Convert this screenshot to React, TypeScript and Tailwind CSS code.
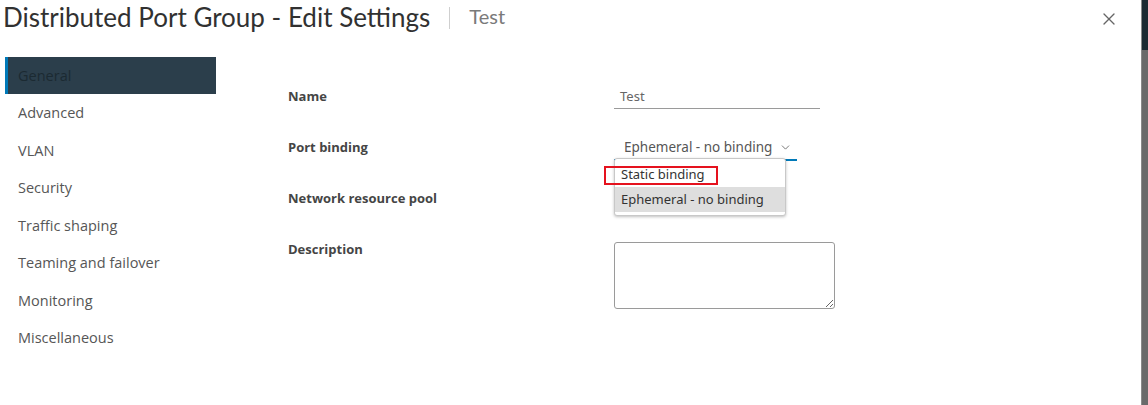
import { X, ChevronDown } from "lucide-react"

const NAV = [
  "General",
  "Advanced",
  "VLAN",
  "Security",
  "Traffic shaping",
  "Teaming and failover",
  "Monitoring",
  "Miscellaneous",
]

const ui = { fontFamily: "Lato, 'Noto Sans', sans-serif" }
const side = { fontFamily: "'Open Sans', 'Noto Sans', sans-serif" }
const field = { fontFamily: "'Noto Sans', 'DejaVu Sans', sans-serif" }

export default function App() {
  return (
    <div className="flex h-[405px] w-[1148px] overflow-hidden bg-white" style={ui}>
      <div className="relative flex flex-1 flex-col">
        {/* Header */}
        <div className="flex h-[57px] items-start pt-[2px]">
          <h1 className="pl-[3px] text-[26px] leading-[30px] text-[#313131]">
            Distributed Port Group - Edit Settings
          </h1>
          <div className="ml-[19px] mt-[5px] h-[22px] w-px bg-[#cfcfcf]" />
          <span className="ml-[19px] mt-[2px] text-[20px] leading-[24px] text-[#7a7a7a]">Test</span>
          <button className="ml-auto mr-[22px] mt-[7px] text-[#666]">
            <X size={20} strokeWidth={1.6} />
          </button>
        </div>

        <div className="flex flex-1">
          {/* Sidebar */}
          <nav className="ml-[5px] w-[211px] shrink-0" style={side}>
            {NAV.map((item, i) =>
              i === 0 ? (
                <div
                  key={item}
                  className="flex h-[37px] items-center border-l-[3px] border-[#0079b8] bg-[#2b3e4b] pl-[10px] text-[14.5px] text-[#1b2a32]"
                >
                  {item}
                </div>
              ) : (
                <div key={item} className="flex h-[37.6px] items-center pl-[13px] text-[14.5px] text-[#565656]">
                  {item}
                </div>
              )
            )}
          </nav>

          {/* Form */}
          <div className="ml-[72px] flex flex-col pt-[14px]" style={side}>
            <div className="flex h-[51px] items-center">
              <div className="w-[326px] text-[13px] font-bold text-[#454545]">Name</div>
              <div className="w-[206px] border-b border-[#9a9a9a] pb-[2px] pl-[6px] pt-[3px] text-[13px] text-[#666]" style={field}>
                Test
              </div>
            </div>
            <div className="flex h-[51px] items-center">
              <div className="w-[326px] text-[13px] font-bold text-[#454545]">Port binding</div>
              <div className="flex w-[183px] items-center border-b-2 border-[#0079b8] pb-[2px] pl-[10px] pt-[3px] text-[13.5px] text-[#565656]" style={field}>
                <span>Ephemeral - no binding</span>
                <ChevronDown size={13} strokeWidth={1.6} className="ml-auto mr-[5px] text-[#666]" />
              </div>
            </div>
            <div className="flex h-[51px] items-center">
              <div className="w-[326px] text-[13px] font-bold text-[#454545]">Network resource pool</div>
            </div>
            <div className="mt-[15px] flex">
              <div className="w-[326px] pt-[1px] text-[13px] font-bold text-[#454545]">Description</div>
              <textarea className="mt-[3px] h-[67px] w-[221px] resize rounded-[3px] border border-[#9a9a9a] outline-none" />
            </div>
          </div>
        </div>

        {/* Open dropdown */}
        <div
          className="absolute left-[614px] top-[158px] w-[172px] rounded-[3px] border border-[#c8c8c8] bg-white py-[3px] text-[13px] text-[#333] shadow-[0_1px_3px_rgba(0,0,0,0.25)]"
          style={field}
        >
          <div className="flex h-[25px] items-center pl-[6px]">Static binding</div>
          <div className="flex h-[25px] items-center bg-[#dedede] pl-[6px]">Ephemeral - no binding</div>
        </div>
        <div className="absolute left-[604px] top-[166px] h-[19px] w-[114px] border-2 border-[#e5121e]" />
      </div>

      {/* Right edge strip */}
      <div className="flex w-[7px] flex-col border-l border-[#8a8a8a]">
        <div className="h-[50px] bg-[#1d2b33]" />
        <div className="flex-1 bg-[#6a6a6a]" />
      </div>
    </div>
  )
}
